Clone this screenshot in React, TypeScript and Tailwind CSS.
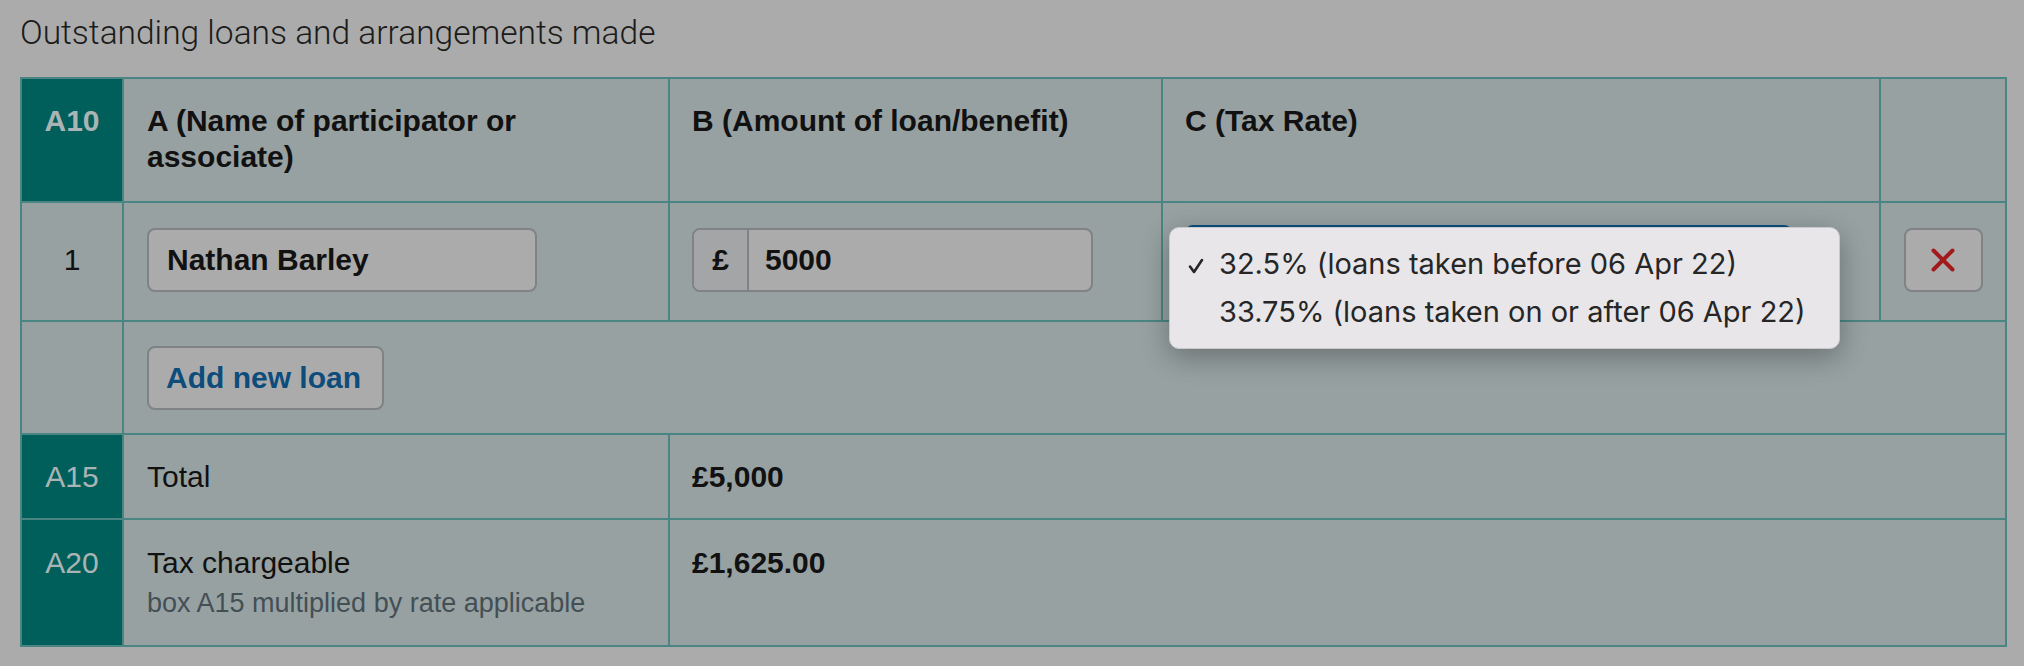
import React from "react";

const B = "border-r-2 border-b-2 border-[#4b8583]";
const TEAL = "bg-[#005f5b]";
const CELL = "bg-[#97a1a2]";

function XIcon() {
  return (
    <svg width="24" height="24" viewBox="0 0 24 24" aria-hidden="true">
      <path d="M2.5 2.5 L21.5 21.5 M21.5 2.5 L2.5 21.5" stroke="#a31a1d" strokeWidth="4" strokeLinecap="round" fill="none" />
    </svg>
  );
}

function Check() {
  return (
    <svg width="16" height="16" viewBox="0 0 16 16" aria-hidden="true">
      <path d="M2 8.5 L6 14 L14 2" stroke="#262626" strokeWidth="2.6" strokeLinecap="round" strokeLinejoin="round" fill="none" />
    </svg>
  );
}

export default function App() {
  return (
    <div className="min-h-[666px] w-[2024px] bg-[#ababab] px-[20px] font-['Liberation_Sans',Arial,sans-serif] text-[#111111]">
      <div className="h-[77px] pt-[16px]">
        <h1 className="font-['Roboto',sans-serif] text-[33.5px] font-light leading-[34px] text-[#1b1b1b]">
          Outstanding loans and arrangements made
        </h1>
      </div>

      <div className="grid w-[1987px] grid-cols-[102px_546px_493px_718px_126px] grid-rows-[124px_119px_113px_85px_127px] border-l-2 border-t-2 border-[#4b8583] text-[30px] leading-[36px]">
        {/* Header */}
        <div className={`${B} ${TEAL} pt-[24px] text-center font-bold text-[#aab4b4]`}>A10</div>
        <div className={`${B} ${CELL} px-[23px] pt-[24px] font-bold`}>A (Name of participator or associate)</div>
        <div className={`${B} ${CELL} px-[22px] pt-[24px] font-bold`}>B (Amount of loan/benefit)</div>
        <div className={`${B} ${CELL} px-[22px] pt-[24px] font-bold`}>C (Tax Rate)</div>
        <div className={`${B} ${CELL}`}></div>

        {/* Row 1 */}
        <div className={`${B} ${CELL} flex items-center justify-center pb-[4px]`}>1</div>
        <div className={`${B} ${CELL} flex items-center px-[23px] pb-[4px]`}>
          <input
            readOnly
            defaultValue="Nathan Barley"
            className="h-[64px] w-[390px] rounded-[8px] border-2 border-[#7f8385] bg-[#ababab] pl-[18px] font-['Liberation_Sans',Arial,sans-serif] text-[30px] font-bold text-[#111111] outline-none"
          />
        </div>
        <div className={`${B} ${CELL} flex items-center px-[22px] pb-[4px]`}>
          <div className="flex h-[64px] w-[401px] overflow-hidden rounded-[8px] border-2 border-[#7f8385] bg-[#ababab]">
            <span className="flex w-[55px] items-center justify-center border-r-2 border-[#7f8385] bg-[#a3a5a6] font-bold">£</span>
            <input
              readOnly
              defaultValue="5000"
              className="min-w-0 flex-1 bg-transparent pl-[16px] font-['Liberation_Sans',Arial,sans-serif] text-[30px] font-bold text-[#111111] outline-none"
            />
          </div>
        </div>
        <div className={`${B} ${CELL} relative flex items-start px-[22px] pt-[22px]`}>
          <div className="h-[64px] w-[607px] rounded-[8px] border-2 border-[#0b4f80] bg-[#ababab]"></div>
          <div className="absolute left-[6px] top-[24px] z-10 h-[122px] w-[671px] rounded-[10px] border border-[#c9c8cb] bg-[#e8e6e9] pt-[12px] font-['Inter',sans-serif] text-[29px] leading-[34px] text-[#262626] shadow-[0_8px_28px_rgba(0,0,0,0.3)]">
            <div className="flex h-[48px] items-center">
              <span className="flex w-[49px] justify-end pr-[15px] pt-[4px]">
                <Check />
              </span>
              <span>32.5% (loans taken before 06 Apr 22)</span>
            </div>
            <div className="flex h-[48px] items-center">
              <span className="w-[49px]"></span>
              <span>33.75% (loans taken on or after 06 Apr 22)</span>
            </div>
          </div>
        </div>
        <div className={`${B} ${CELL} flex items-center justify-center pb-[4px]`}>
          <button className="flex h-[64px] w-[79px] items-center justify-center rounded-[8px] border-2 border-[#7f8385] bg-[#ababab]">
            <XIcon />
          </button>
        </div>

        {/* Add row */}
        <div className={`${B} ${CELL}`}></div>
        <div className={`${B} ${CELL} col-span-4 flex items-center pl-[23px]`}>
          <button className="h-[64px] w-[237px] rounded-[8px] border-2 border-[#7f8385] bg-[#ababab] pl-[17px] text-left font-['Liberation_Sans',Arial,sans-serif] text-[30px] font-bold text-[#0e4c7c]">
            Add new loan
          </button>
        </div>

        {/* A15 */}
        <div className={`${B} ${TEAL} pt-[24px] text-center text-[#aab4b4]`}>A15</div>
        <div className={`${B} ${CELL} px-[23px] pt-[24px]`}>Total</div>
        <div className={`${B} ${CELL} col-span-3 px-[22px] pt-[24px] font-bold`}>£5,000</div>

        {/* A20 */}
        <div className={`${B} ${TEAL} pt-[25px] text-center text-[#aab4b4]`}>A20</div>
        <div className={`${B} ${CELL} px-[23px] pt-[25px]`}>
          <div>Tax chargeable</div>
          <div className="mt-[5px] text-[27px] leading-[34px] text-[#434f55]">box A15 multiplied by rate applicable</div>
        </div>
        <div className={`${B} ${CELL} col-span-3 px-[22px] pt-[25px] font-bold`}>£1,625.00</div>
      </div>
    </div>
  );
}
